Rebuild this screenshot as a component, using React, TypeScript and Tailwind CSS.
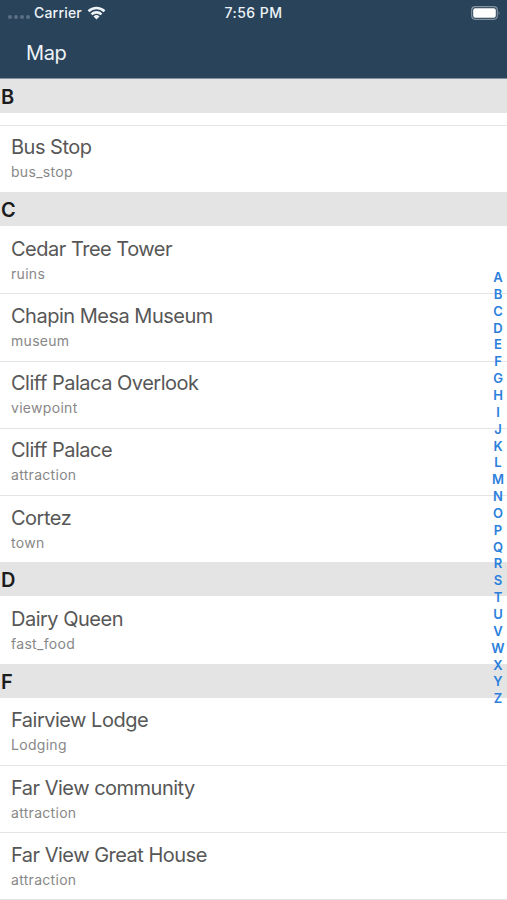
interface Place {
  name: string
  kind: string
}

interface Section {
  letter: string
  places: Place[]
}

const sections: Section[] = [
  {
    letter: 'C',
    places: [
      { name: 'Cedar Tree Tower', kind: 'ruins' },
      { name: 'Chapin Mesa Museum', kind: 'museum' },
      { name: 'Cliff Palaca Overlook', kind: 'viewpoint' },
      { name: 'Cliff Palace', kind: 'attraction' },
      { name: 'Cortez', kind: 'town' },
    ],
  },
  { letter: 'D', places: [{ name: 'Dairy Queen', kind: 'fast_food' }] },
  {
    letter: 'F',
    places: [
      { name: 'Fairview Lodge', kind: 'Lodging' },
      { name: 'Far View community', kind: 'attraction' },
      { name: 'Far View Great House', kind: 'attraction' },
    ],
  },
]

const letters = 'ABCDEFGHIJKLMNOPQRSTUVWXYZ'.split('')

function StatusBar() {
  return (
    <div className="grid h-[25px] grid-cols-3 items-center px-2 text-[14px] font-medium text-[#eef3f8]">
      <div className="flex items-center">
        <div className="mt-[9px] flex gap-[2px]">
          {[0, 1, 2, 3].map(i => (
            <span key={i} className="size-[4px] rounded-full bg-[#5b7083]" />
          ))}
        </div>
        <span className="ml-[4px] tracking-[0.2px]">Carrier</span>
        <svg className="ml-[5px] h-[14px] w-[19px]" viewBox="0 0 18 14" fill="none" stroke="currentColor" strokeWidth="2.6">
          <path d="M1 5.2a11.5 11.5 0 0 1 16 0" />
          <path d="M4 8.4a7.2 7.2 0 0 1 10 0" />
          <path d="M9 13.6 6 10.5a4.3 4.3 0 0 1 6 0z" fill="currentColor" stroke="none" />
        </svg>
      </div>
      <span className="text-center tracking-[0.45px]">7:56 PM</span>
      <div className="-mr-[2px] flex justify-end">
        <svg className="h-[14px] w-[30px]" viewBox="0 0 30 14">
          <rect x="0.7" y="0.7" width="25.6" height="12.6" rx="3.5" fill="none" stroke="#8492a0" strokeWidth="1.2" />
          <rect x="2.2" y="2.2" width="22.6" height="9.6" rx="2" fill="white" />
          <path d="M27.7 4.8q1.8 2.2 0 4.4z" fill="#8492a0" />
        </svg>
      </div>
    </div>
  )
}

function SectionHeader({ letter }: { letter: string }) {
  return (
    <h2 className="flex h-[34.1px] items-center bg-[#e4e4e4] pt-[1.6px] pl-px text-[20px] font-semibold text-[#1c1c1c]">
      {letter}
    </h2>
  )
}

function PlaceRow({ name, kind }: Place) {
  return (
    <li className="h-[67.25px] border-t border-[#e4e4e4] pt-[9.5px] pl-[11px]">
      <div className="text-[20px] leading-[25px] tracking-[-0.5px] text-[#575757]">{name}</div>
      <div className="mt-[3px] text-[14px] leading-[18px] tracking-[0.3px] text-[#888888]">{kind}</div>
    </li>
  )
}

export default function App() {
  return (
    <div className="relative h-[900px] w-[507px] overflow-hidden bg-white font-['Inter','Liberation_Sans',sans-serif]">
      <header className="h-[79px] border-b border-[#8090a0] bg-[#29435a]">
        <StatusBar />
        <h1 className="pt-[14px] pl-[26px] text-[20px] leading-[28px] tracking-[-0.4px] text-[#eef3f8]">Map</h1>
      </header>

      <SectionHeader letter="B" />
      {/* bottom of the row scrolled under the sticky header */}
      <div className="h-[11.7px]" />
      <ul>
        <PlaceRow name="Bus Stop" kind="bus_stop" />
      </ul>

      {sections.map(section => (
        <section key={section.letter}>
          <SectionHeader letter={section.letter} />
          <ul className="*:first:border-transparent">
            {section.places.map(place => (
              <PlaceRow key={place.name} {...place} />
            ))}
          </ul>
        </section>
      ))}
      <div className="-mt-px border-t border-[#e4e4e4]" />

      <nav className="absolute top-[269.1px] right-0 flex w-[18px] flex-col items-center text-[13px] font-semibold text-[#2a80dc]">
        {letters.map(letter => (
          <a key={letter} className="h-[16.85px] leading-[17px]">{letter}</a>
        ))}
      </nav>
    </div>
  )
}
